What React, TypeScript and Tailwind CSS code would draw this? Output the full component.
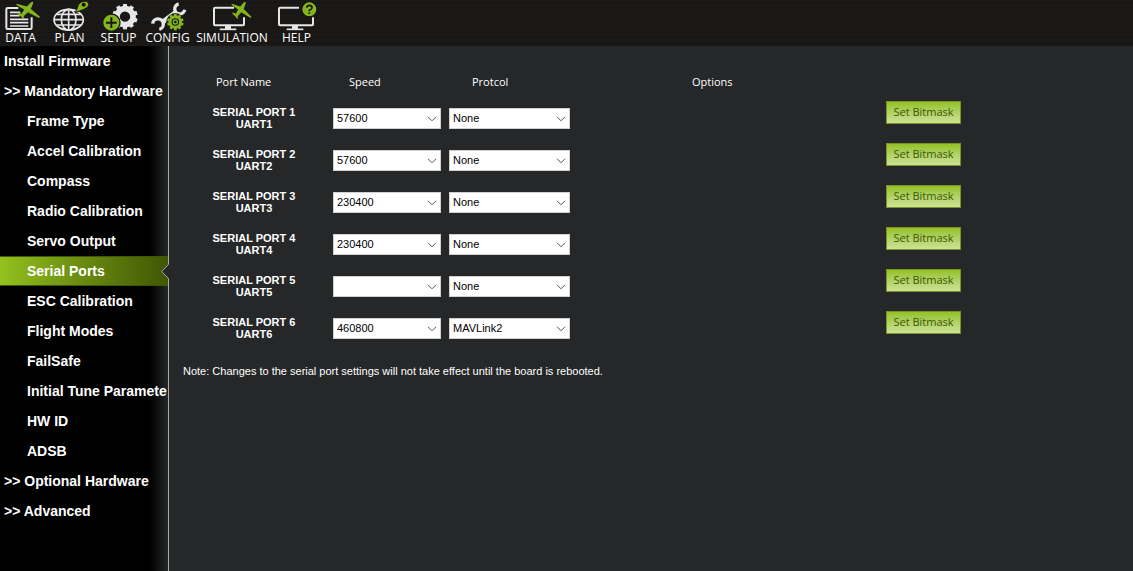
import { useState } from "react";
import type { ReactNode } from "react";

interface SerialPort {
  name: string;
  uart: string;
  speed: string;
  protocol: string;
}

const PORTS: SerialPort[] = [
  { name: "SERIAL PORT 1", uart: "UART1", speed: "57600", protocol: "None" },
  { name: "SERIAL PORT 2", uart: "UART2", speed: "57600", protocol: "None" },
  { name: "SERIAL PORT 3", uart: "UART3", speed: "230400", protocol: "None" },
  { name: "SERIAL PORT 4", uart: "UART4", speed: "230400", protocol: "None" },
  { name: "SERIAL PORT 5", uart: "UART5", speed: "", protocol: "None" },
  { name: "SERIAL PORT 6", uart: "UART6", speed: "460800", protocol: "MAVLink2" },
];

const SPEEDS = ["", "57600", "115200", "230400", "460800", "921600"];
const PROTOCOLS = ["None", "MAVLink1", "MAVLink2", "GPS"];

const MENU = [
  { label: "Install Firmware", child: false },
  { label: ">> Mandatory Hardware", child: false },
  { label: "Frame Type", child: true },
  { label: "Accel Calibration", child: true },
  { label: "Compass", child: true },
  { label: "Radio Calibration", child: true },
  { label: "Servo Output", child: true },
  { label: "Serial Ports", child: true },
  { label: "ESC Calibration", child: true },
  { label: "Flight Modes", child: true },
  { label: "FailSafe", child: true },
  { label: "Initial Tune Paramete", child: true },
  { label: "HW ID", child: true },
  { label: "ADSB", child: true },
  { label: ">> Optional Hardware", child: false },
  { label: ">> Advanced", child: false },
];

const GEAR_ANGLES = [0, 36, 72, 108, 144, 180, 216, 252, 288, 324];

function Icon({ children }: { children: ReactNode }) {
  return (
    <svg viewBox="0 0 120 93" className="w-10 h-[31px]" fill="none" aria-hidden="true">
      {children}
    </svg>
  );
}

function Plane() {
  return (
    <g fill="#84b51c">
      {/* body */}
      <path d="M87 10 Q92 4 96 6 Q98 9 94 16 L88 31 L66 50 L58 46 L73 24 Z" />
      {/* wings */}
      <path d="M47 11 L80 20 L96 32 L117 50 L114 54 L86 40 L68 28 L46 15 Z" />
      {/* tail */}
      <path d="M50 37 L64 43 L70 54 L66 56 L59 49 L49 41 Z" />
    </g>
  );
}

function Monitor({ right }: { right: number }) {
  const mid = right / 2;
  return (
    <g stroke="#e6e6e6" strokeWidth="6" strokeLinejoin="round">
      <path d={`M66 23 H9 Q6 23 6 26 V73 Q6 76 9 76 H${right - 3} Q${right} 76 ${right} 73 V52`} />
      <path d={`M${mid} 76 V87`} strokeWidth="18" />
      <path d={`M${mid - 25} 88 H${mid + 25}`} strokeWidth="5" />
    </g>
  );
}

function DataIcon() {
  return (
    <Icon>
      <path d="M52 24 H20 Q16 24 16 28 V83 Q16 87 20 87 H88 Q92 87 92 83 V52" stroke="#e6e6e6" strokeWidth="6" />
      <path d="M27 37 H58 M27 47 H56 M27 58 H82 M27 68 H82 M27 78 H82" stroke="#e6e6e6" strokeWidth="5" />
      <Plane />
    </Icon>
  );
}

function PlanIcon() {
  return (
    <Icon>
      <g stroke="#e6e6e6" strokeWidth="5">
        <ellipse cx="56" cy="59" rx="44" ry="31" />
        <ellipse cx="56" cy="59" rx="22" ry="31" />
        <path d="M56 28 V90 M12 59 H100 M19 43 H93 M19 75 H93" />
      </g>
      <path d="M76 38 L86 13 Q94 2 110 4 Q122 13 112 22 L102 28 Z" fill="#84b51c" stroke="#181613" strokeWidth="3" />
      <circle cx="101" cy="14" r="6" fill="#181613" />
    </Icon>
  );
}

function SetupIcon() {
  return (
    <Icon>
      <circle cx="78" cy="50" r="24" stroke="#e6e6e6" strokeWidth="17" />
      <g fill="#e6e6e6">
        {GEAR_ANGLES.map((a) => (
          <path key={a} d="M72 12 H84 V24 H72 Z" transform={`rotate(${a} 78 50)`} />
        ))}
      </g>
      <circle cx="37" cy="68" r="26" fill="#84b51c" stroke="#181613" strokeWidth="4" />
      <path d="M37 52 V84 M21 68 H53" stroke="#181613" strokeWidth="6" />
    </Icon>
  );
}

function ConfigIcon() {
  return (
    <Icon>
      {/* wrench */}
      <path d="M82 38 L43 67" stroke="#e6e6e6" strokeWidth="15" />
      <path d="M92 12 A15 15 0 1 0 110 29" stroke="#e6e6e6" strokeWidth="10" />
      <path d="M14 71 A16 16 0 1 1 34 88" stroke="#e6e6e6" strokeWidth="10" />
      {/* gear */}
      <circle cx="82" cy="66" r="27" fill="#181613" />
      <circle cx="82" cy="66" r="16" stroke="#84b51c" strokeWidth="9" />
      <g fill="#84b51c">
        {GEAR_ANGLES.map((a) => (
          <path key={a} d="M78 41 H86 V48 H78 Z" transform={`rotate(${a} 82 66)`} />
        ))}
      </g>
      <circle cx="82" cy="66" r="6" stroke="#84b51c" strokeWidth="4" />
    </Icon>
  );
}

function SimulationIcon() {
  return (
    <Icon>
      <Monitor right={96} />
      <g transform="translate(20 0) scale(0.84 1)">
        <Plane />
      </g>
    </Icon>
  );
}

function HelpIcon() {
  return (
    <Icon>
      <Monitor right={108} />
      <circle cx="97" cy="28" r="23" fill="#84b51c" stroke="#181613" strokeWidth="4" />
      <path d="M89 23 Q90 16 97 16 Q105 16 105 23 Q105 27 97 31 V34" stroke="#181613" strokeWidth="5" />
      <path d="M97 37 V42" stroke="#181613" strokeWidth="5" />
    </Icon>
  );
}

function ToolButton({ label, wide, children }: { label: string; wide?: boolean; children: ReactNode }) {
  return (
    <button className={`flex flex-col items-center shrink-0 ${wide ? "w-[72px]" : "w-[41px]"}`}>
      {children}
      <span className="text-xs leading-[14px]">{label}</span>
    </button>
  );
}

function Toolbar() {
  return (
    <header className="flex gap-2 h-[46px] text-white font-['Open_Sans',sans-serif] bg-[#1a1816] bg-[repeating-linear-gradient(0deg,#1b1917_0px,#1b1917_2px,#181614_3px,#1b1917_5px)]">
      <ToolButton label="DATA"><DataIcon /></ToolButton>
      <ToolButton label="PLAN"><PlanIcon /></ToolButton>
      <ToolButton label="SETUP"><SetupIcon /></ToolButton>
      <ToolButton label="CONFIG"><ConfigIcon /></ToolButton>
      <ToolButton label="SIMULATION" wide><SimulationIcon /></ToolButton>
      <ToolButton label="HELP"><HelpIcon /></ToolButton>
    </header>
  );
}

function Sidebar() {
  const [active, setActive] = useState("Serial Ports");
  return (
    <nav className="w-[169px] shrink-0 border-r border-[#a9a9a9] bg-[linear-gradient(to_left,#262728,#000_18px)]">
      {MENU.map((item) => {
        const selected = item.label === active;
        return (
          <button
            key={item.label}
            onClick={() => setActive(item.label)}
            className={`relative block w-full h-[30px] text-left text-sm font-bold text-white whitespace-nowrap ${
              item.child ? "pl-[27px]" : "pl-1"
            } ${selected ? "bg-linear-to-r from-[#94c11f] to-[#405704] border-y border-[#405704]" : ""}`}
          >
            {item.label}
            {selected && (
              <svg viewBox="0 0 8 15" className="absolute -right-px top-[7px] w-2 h-[15px]" aria-hidden="true">
                <path d="M8 0 L0.5 7.5 L8 15 Z" fill="#262728" />
                <path d="M7.5 0.5 L0.7 7.5 L7.5 14.5" fill="none" stroke="#a9a9a9" />
              </svg>
            )}
          </button>
        );
      })}
    </nav>
  );
}

function Dropdown({ label, value, options }: { label: string; value: string; options: string[] }) {
  return (
    <div className="relative">
      <select
        aria-label={label}
        defaultValue={value}
        className="block w-full h-[21px] pl-[3px] pr-5 appearance-none bg-white border border-[#d0d0d0] text-black text-[11px]"
      >
        {options.map((o) => (
          <option key={o} value={o}>{o}</option>
        ))}
      </select>
      <svg viewBox="0 0 10 6" className="absolute right-1 top-2 w-[10px] h-[6px] pointer-events-none" aria-hidden="true">
        <path d="M1 0.8 L5 4.8 L9 0.8" fill="none" stroke="#555" />
      </svg>
    </div>
  );
}

function PortRow({ port }: { port: SerialPort }) {
  return (
    <tr className="h-[42px] align-top">
      <th scope="row" className="pt-2 text-[11px] leading-3 font-bold">
        {port.name}
        <br />
        {port.uart}
      </th>
      <td className="pt-[10px] pl-2">
        <Dropdown label={`${port.name} speed`} value={port.speed} options={SPEEDS} />
      </td>
      <td className="pt-[10px] pl-2">
        <Dropdown label={`${port.name} protocol`} value={port.protocol} options={PROTOCOLS} />
      </td>
      <td className="pt-[3px] text-right">
        <button className="w-[75px] h-[23px] align-top border border-[#799423] bg-linear-to-b from-[#94c11f] to-[#cde296] text-[11px] text-[#405704] font-['Open_Sans',sans-serif] whitespace-nowrap">
          Set Bitmask
        </button>
      </td>
    </tr>
  );
}

export default function App() {
  return (
    <div className="min-h-screen flex flex-col bg-[#262728] text-white font-['Liberation_Sans',Arial,sans-serif]">
      <Toolbar />
      <div className="flex flex-1">
        <Sidebar />
        <main className="flex-1 min-w-0 pl-[14px] pt-7">
          <table className="table-fixed w-[778px]">
            <colgroup>
              <col className="w-[142px]" />
              <col className="w-[116px]" />
              <col className="w-[129px]" />
              <col />
            </colgroup>
            <thead className="text-[11px] leading-4 text-left font-['Open_Sans',sans-serif]">
              <tr className="h-6 align-top">
                <th className="pl-[33px] font-normal">Port Name</th>
                <th className="pl-6 font-normal">Speed</th>
                <th className="pl-[31px] font-normal">Protcol</th>
                <th className="pl-[122px] font-normal">Options</th>
              </tr>
            </thead>
            <tbody>
              {PORTS.map((port) => (
                <PortRow key={port.name} port={port} />
              ))}
            </tbody>
          </table>
          <p className="mt-[13px] text-[11px] leading-4">
            Note: Changes to the serial port settings will not take effect until the board is rebooted.
          </p>
        </main>
      </div>
    </div>
  );
}
